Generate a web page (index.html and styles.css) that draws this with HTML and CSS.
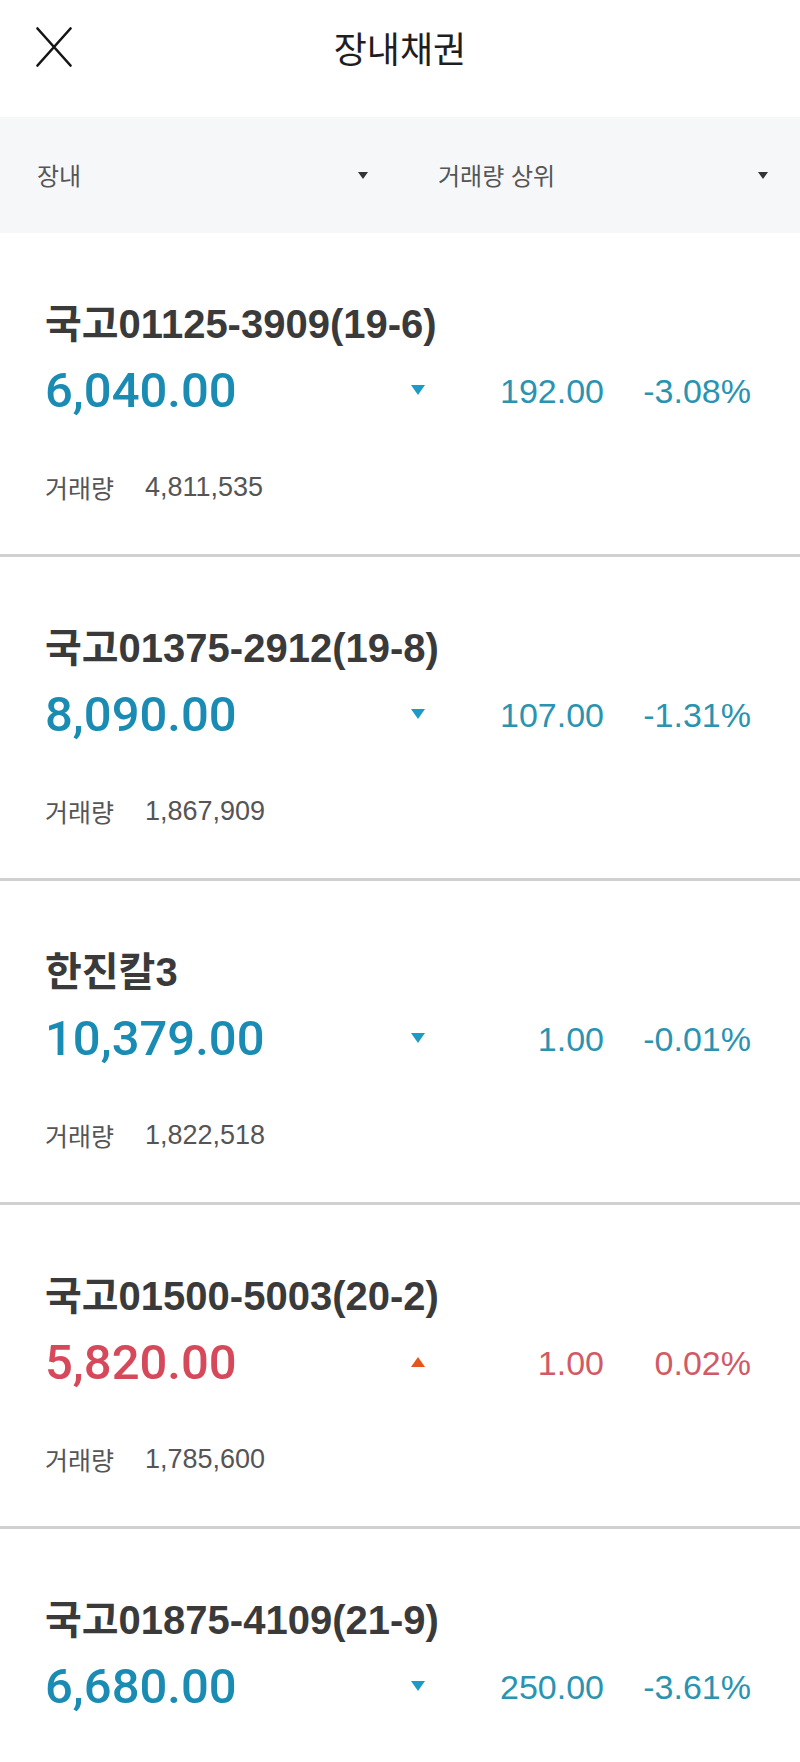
FILE: index.html
```html
<!DOCTYPE html>
<html lang="ko">
<head>
<meta charset="utf-8">
<title>장내채권</title>
<link rel="stylesheet" href="styles.css">
</head>
<body>
<header class="header">
  <div class="header-left">
    <svg class="close-icon" width="36" height="40" viewBox="0 0 36 40" aria-label="닫기">
      <path d="M1.5 1.5 L34.5 38.5 M34.5 1.5 L1.5 38.5" stroke="#151515" stroke-width="2.6" stroke-linecap="round" fill="none"/>
    </svg>
  </div>
  <h1 class="title">장내채권</h1>
  <div class="header-right"></div>
</header>

<div class="filters">
  <div class="filter"><span class="filter-label">장내</span><span class="caret"></span></div>
  <div class="filter"><span class="filter-label">거래량 상위</span><span class="caret"></span></div>
</div>

<ul class="list">
  <li class="item">
    <div class="name">국고01125-3909(19-6)</div>
    <div class="price-row down">
      <span class="price">6,040.00</span>
      <span class="arrow"></span>
      <span class="change">192.00</span>
      <span class="rate">-3.08%</span>
    </div>
    <div class="volume"><span class="vol-label">거래량</span><span class="vol-value">4,811,535</span></div>
  </li>
  <li class="item">
    <div class="name">국고01375-2912(19-8)</div>
    <div class="price-row down">
      <span class="price">8,090.00</span>
      <span class="arrow"></span>
      <span class="change">107.00</span>
      <span class="rate">-1.31%</span>
    </div>
    <div class="volume"><span class="vol-label">거래량</span><span class="vol-value">1,867,909</span></div>
  </li>
  <li class="item">
    <div class="name">한진칼3</div>
    <div class="price-row down">
      <span class="price">10,379.00</span>
      <span class="arrow"></span>
      <span class="change">1.00</span>
      <span class="rate">-0.01%</span>
    </div>
    <div class="volume"><span class="vol-label">거래량</span><span class="vol-value">1,822,518</span></div>
  </li>
  <li class="item">
    <div class="name">국고01500-5003(20-2)</div>
    <div class="price-row up">
      <span class="price">5,820.00</span>
      <span class="arrow"></span>
      <span class="change">1.00</span>
      <span class="rate">0.02%</span>
    </div>
    <div class="volume"><span class="vol-label">거래량</span><span class="vol-value">1,785,600</span></div>
  </li>
  <li class="item item-last">
    <div class="name">국고01875-4109(21-9)</div>
    <div class="price-row down">
      <span class="price">6,680.00</span>
      <span class="arrow"></span>
      <span class="change">250.00</span>
      <span class="rate">-3.61%</span>
    </div>
  </li>
</ul>
</body>
</html>
```

FILE: styles.css
```css
* { box-sizing: border-box; }

html, body {
  margin: 0;
  padding: 0;
  background: #ffffff;
}

body {
  font-family: "Liberation Sans", "Noto Sans CJK KR", Arial, sans-serif;
  color: #333;
  overflow: hidden;
}

.header {
  height: 117px;
  display: grid;
  grid-template-columns: 1fr auto 1fr;
  align-items: center;
}

.header-left {
  padding-left: 36px;
  display: flex;
  align-items: center;
  padding-bottom: 24px;
}

.close-icon { display: block; }

.title {
  margin: 0;
  padding-bottom: 24px;
  font-family: "Noto Sans CJK KR", sans-serif;
  font-weight: 400;
  font-size: 36px;
  line-height: 46px;
  color: #1e1e1e;
}

.filters {
  height: 116px;
  background: #f6f7f9;
  display: grid;
  grid-template-columns: 1fr 1fr;
}

.filter {
  display: flex;
  align-items: center;
  justify-content: space-between;
  padding: 0 32px 0 37px;
}

.filter + .filter {
  padding-left: 38px;
}

.filter-label {
  font-family: "Noto Sans CJK KR", sans-serif;
  font-size: 24px;
  color: #555;
  line-height: 34px;
}

.caret {
  width: 0;
  height: 0;
  border-left: 5.5px solid transparent;
  border-right: 5.5px solid transparent;
  border-top: 7px solid #333;
}

.list {
  list-style: none;
  margin: 0;
  padding: 0;
}

.item {
  height: 324px;
  padding: 69px 49px 0 45px;
  border-bottom: 3px solid #d0d0d0;
}

.item-last {
  border-bottom: 0;
}

.name {
  font-family: "Liberation Sans", "Noto Sans CJK KR", sans-serif;
  font-weight: 700;
  font-size: 40px;
  line-height: 44px;
  color: #3a3a3a;
}

.price-row {
  margin-top: 17px;
  height: 56px;
  display: grid;
  grid-template-columns: 366px 14px 179px 147px;
  align-items: center;
}

.price {
  font-family: Roboto, "Liberation Sans", sans-serif;
  font-weight: 500;
  font-size: 49px;
  line-height: 56px;
}

.arrow {
  width: 0;
  height: 0;
  border-left: 7px solid transparent;
  border-right: 7px solid transparent;
  margin-bottom: 3px;
}

.change, .rate {
  text-align: right;
  font-size: 34px;
  line-height: 40px;
}

.down .price { color: #1a8cb4; }
.down .change, .down .rate { color: #2a93b2; }
.down .arrow { border-top: 10px solid #1b9bc6; }

.up .price { color: #d5495a; }
.up .change, .up .rate { color: #d25a66; }
.up .arrow { border-bottom: 10px solid #e4561c; }

.volume {
  margin-top: 51px;
  display: flex;
  align-items: center;
  gap: 31px;
  line-height: 34px;
  color: #555;
}

.vol-label {
  font-family: "Noto Sans CJK KR", sans-serif;
  font-size: 25px;
}

.vol-value {
  font-size: 27px;
}
```
